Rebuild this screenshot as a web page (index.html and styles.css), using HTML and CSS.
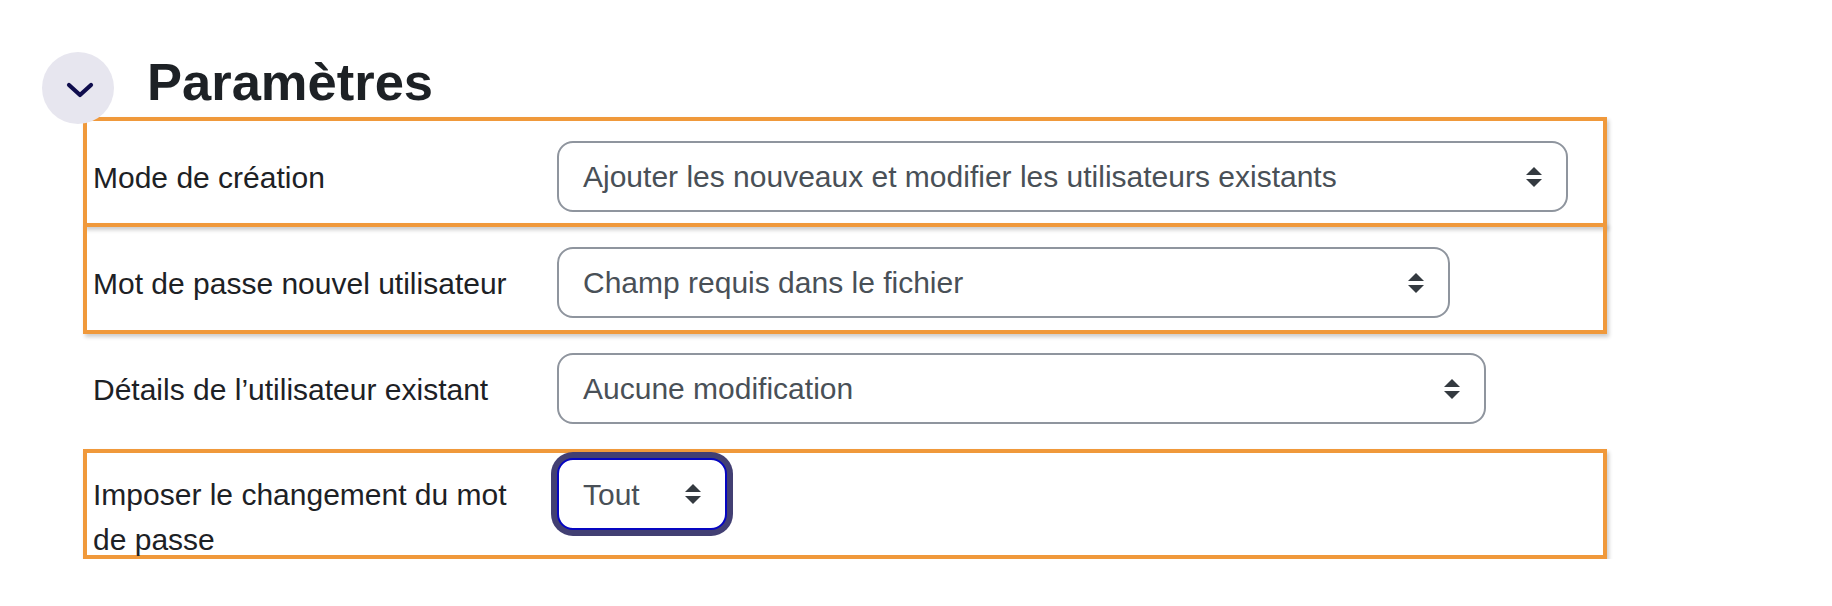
FILE: index.html
```html
<!DOCTYPE html>
<html lang="fr">
<head>
<meta charset="utf-8">
<title>Paramètres</title>
<link rel="stylesheet" href="styles.css">
</head>
<body>
<div class="page">
  <div class="header">
    <div class="toggle">
      <svg width="28" height="16" viewBox="0 0 28 16"><path d="M3 3 L14 13 L25 3" fill="none" stroke="#0f0d4d" stroke-width="4.2" stroke-linecap="round" stroke-linejoin="round"/></svg>
    </div>
    <h3 class="title">Paramètres</h3>
  </div>

  <div class="row row-1 marked">
    <div class="label">Mode de création</div>
    <div class="select sel-1"><span>Ajouter les nouveaux et modifier les utilisateurs existants</span><svg class="arrows" width="16" height="20" viewBox="0 0 4 5"><path d="M2 0L0 2h4zm0 5L0 3h4z" fill="#343a40"/></svg></div>
  </div>

  <div class="row row-2 marked">
    <div class="label">Mot de passe nouvel utilisateur</div>
    <div class="select sel-2"><span>Champ requis dans le fichier</span><svg class="arrows" width="16" height="20" viewBox="0 0 4 5"><path d="M2 0L0 2h4zm0 5L0 3h4z" fill="#343a40"/></svg></div>
  </div>

  <div class="row row-3">
    <div class="label">Détails de l’utilisateur existant</div>
    <div class="select sel-3"><span>Aucune modification</span><svg class="arrows" width="16" height="20" viewBox="0 0 4 5"><path d="M2 0L0 2h4zm0 5L0 3h4z" fill="#343a40"/></svg></div>
  </div>

  <div class="row row-4 marked">
    <div class="label">Imposer le changement du mot de passe</div>
    <div class="select sel-4 focused"><span>Tout</span><svg class="arrows" width="16" height="20" viewBox="0 0 4 5"><path d="M2 0L0 2h4zm0 5L0 3h4z" fill="#343a40"/></svg></div>
  </div>
</div>
</body>
</html>
```

FILE: styles.css
```css
html, body {
  margin: 0;
  padding: 0;
  background: #ffffff;
}

body {
  font-family: "Liberation Sans", Arial, Helvetica, sans-serif;
  color: #1d2125;
}

.page {
  width: 1832px;
}

.header {
  display: flex;
  align-items: flex-start;
  gap: 33px;
  padding: 50px 0 0 42px;
}

.toggle {
  width: 72px;
  height: 72px;
  margin-top: 2px;
  margin-bottom: -7px;
  border-radius: 50%;
  background: #e7e6ef;
  display: flex;
  align-items: center;
  justify-content: center;
  flex-shrink: 0;
}

.toggle svg {
  margin: 3px 0 0 3px;
}

.title {
  margin: 0;
  font-size: 52.5px;
  line-height: 63px;
  font-weight: 700;
  color: #1d2125;
}

.row {
  display: flex;
  align-items: flex-start;
  box-sizing: border-box;
  width: 1524px;
  margin-left: 83px;
  border: 4px solid transparent;
}

.row.marked {
  border-color: #f0993b;
  box-shadow: 2px 3px 4px rgba(0, 0, 0, 0.2);
}

.row-1 {
  padding: 20px 0 11px;
}

.row-2 {
  margin-top: -4px;
  padding: 20px 0 12px;
}

.row-3 {
  margin-top: -4px;
  padding: 19px 0 21px;
}

.row-4 {
  height: 110px;
  padding: 5px 0 0;
}

.label {
  box-sizing: border-box;
  width: 470px;
  flex-shrink: 0;
  padding: 14px 30px 0 6px;
  font-size: 30px;
  line-height: 45px;
  color: #1d2125;
}

.select {
  box-sizing: border-box;
  height: 71px;
  display: flex;
  align-items: center;
  justify-content: space-between;
  padding: 0 24px;
  border: 2px solid #8f959e;
  border-radius: 16px;
  background: #ffffff;
  font-size: 30px;
  color: #495057;
  white-space: nowrap;
}

.select span {
  padding-top: 1px;
}

.sel-1 { width: 1011px; }
.sel-2 { width: 893px; }
.sel-3 { width: 929px; }
.sel-4 { width: 170px; height: 72px; }

.select.focused {
  border: 2.5px solid #0606c2;
  box-shadow: 0 0 0 6px #423f73;
}

.arrows {
  flex-shrink: 0;
  display: block;
}
```
